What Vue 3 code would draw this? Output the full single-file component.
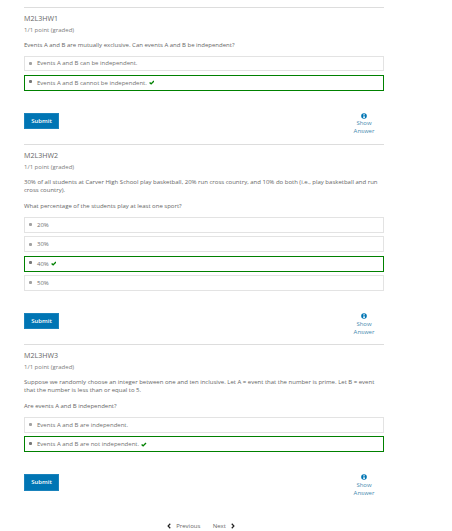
<script setup>
const problems = [
  {
    title: 'M2L3HW1',
    paragraphs: ['Events A and B are mutually exclusive. Can events A and B be independent?'],
    options: [
      { text: 'Events A and B can be independent.' },
      { text: 'Events A and B cannot be independent.', correct: true },
    ],
  },
  {
    title: 'M2L3HW2',
    paragraphs: [
      '30% of all students at Carver High School play basketball, 20% run cross country, and 10% do both (i.e., play basketball and run\ncross country).',
      'What percentage of the students play at least one sport?',
    ],
    options: [{ text: '20%' }, { text: '30%' }, { text: '40%', correct: true }, { text: '50%' }],
  },
  {
    title: 'M2L3HW3',
    paragraphs: [
      'Suppose we randomly choose an integer between one and ten inclusive. Let A = event that the number is prime. Let B = event\nthat the number is less than or equal to 5.',
      'Are events A and B independent?',
    ],
    options: [
      { text: 'Events A and B are independent.' },
      { text: 'Events A and B are not independent.', correct: true },
    ],
  },
]
</script>

<template>
  <main class="page">
    <section v-for="p in problems" :key="p.title" class="problem">
      <h3 class="title">{{ p.title }}</h3>
      <div class="points">1/1 point (graded)</div>
      <div class="question">
        <p v-for="t in p.paragraphs" :key="t">{{ t }}</p>
      </div>
      <div class="options">
        <label v-for="o in p.options" :key="o.text" class="option" :class="{ correct: o.correct }">
          <span class="radio"></span>
          <span>{{ o.text }}</span>
          <svg v-if="o.correct" class="check" viewBox="0 0 12 10">
            <path d="M1.3 5.2 4.5 8 10.7 1.8" fill="none" stroke="#008100" stroke-width="3" />
          </svg>
        </label>
      </div>
      <div class="actions">
        <button class="submit">Submit</button>
        <button class="show">
          <svg class="info" viewBox="0 0 12 12">
            <circle cx="6" cy="6" r="5.600" fill="#0075b4" />
            <path d="M5 2.2h2.2v1.6H5zM4.4 5h2.8v3.6h.7V10H4.3V8.600h.8V6.300h-.7z" fill="#fff" />
          </svg>
          <span>Show</span>
          <span>Answer</span>
        </button>
      </div>
    </section>
    <nav class="pager">
      <a class="link">
        <svg class="chev" viewBox="0 0 8 12"><path d="M6.500 1.500 2.200 6l4.300 4.500" fill="none" stroke="#222" stroke-width="2.400" /></svg>
        <span>Previous</span>
      </a>
      <a class="link">
        <span>Next</span>
        <svg class="chev" viewBox="0 0 8 12"><path d="M1.500 1.500 5.800 6l-4.300 4.500" fill="none" stroke="#222" stroke-width="2.400" /></svg>
      </a>
    </nav>
  </main>
</template>

<style>
body {
  margin: 0;
  background: #fff;
}
</style>

<style scoped>
.page {
  box-sizing: border-box;
  width: 452px;
  height: 531px;
  overflow: hidden;
  padding: 6.5px 68px 0 24px;
  font-family: 'Open Sans', sans-serif;
  font-size: 6px;
  line-height: 8px;
  color: #666;
}
.problem {
  border-top: 1px solid #ddd;
}
.title {
  margin: 0;
  padding-top: 5.25px;
  font-size: 7.1px;
  font-weight: 400;
  line-height: 10px;
}
.points {
  margin-top: 2.75px;
  color: #7c7c7c;
}
.question {
  padding-top: 7px;
}
.question p {
  margin: 0;
  white-space: pre;
}
.question p + p {
  margin-top: 8px;
}
.options {
  display: flex;
  flex-direction: column;
  gap: 3.38px;
  padding-top: 7px;
}
.option {
  box-sizing: border-box;
  height: 15.95px;
  border: 1px solid #e3e3e3;
  display: flex;
  align-items: center;
  padding-left: 4px;
  color: #707070;
}
.option.correct {
  border-color: #008100;
}
.radio {
  width: 3px;
  height: 3px;
  margin-right: 5px;
  border-radius: 1px;
  background: #a2a2a2;
}
.correct .radio {
  background: #777;
  margin-bottom: 2px;
}
.problem:nth-child(3) .correct .radio {
  margin-bottom: 1px;
}
.check {
  width: 5.6px;
  height: 5px;
  margin-left: 2px;
}
.actions {
  display: flex;
  justify-content: space-between;
  align-items: flex-start;
  height: 31.2px;
  margin-top: 22px;
}
button {
  border: 0;
  padding: 0;
  margin: 0;
  background: none;
  font: inherit;
}
.submit {
  box-sizing: border-box;
  width: 35px;
  height: 16.3px;
  border: 1px solid #1a83bc;
  background: #0075b4;
  color: #fff;
  font-weight: 600;
}
.show {
  display: flex;
  flex-direction: column;
  align-items: center;
  width: 40px;
  color: #4a8bb0;
}
.info {
  width: 6px;
  height: 6px;
}
.problem + .problem .info {
  margin-bottom: 1px;
}
.pager {
  display: flex;
  gap: 12.4px;
  padding: 16.6px 0 0 143px;
}
.link {
  display: flex;
  align-items: center;
  gap: 5.2px;
}
.chev {
  width: 4px;
  height: 6px;
}
</style>
